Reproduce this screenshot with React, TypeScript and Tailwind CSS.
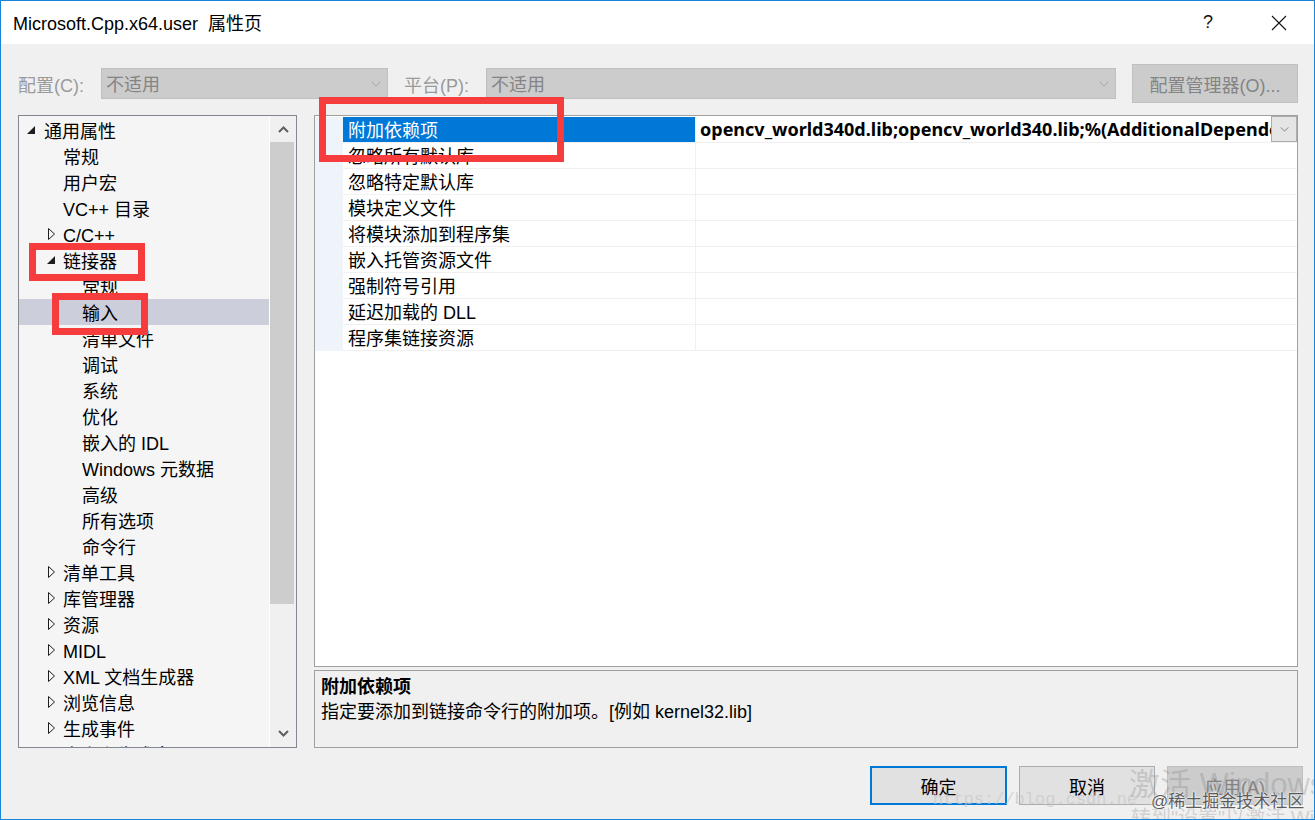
import React from "react";

type TreeItem = { level: number; text: string; arrow?: "exp" | "col"; selected?: boolean };

const tree: TreeItem[] = [
  { level: 0, text: "通用属性", arrow: "exp" },
  { level: 1, text: "常规" },
  { level: 1, text: "用户宏" },
  { level: 1, text: "VC++ 目录" },
  { level: 1, text: "C/C++", arrow: "col" },
  { level: 1, text: "链接器", arrow: "exp" },
  { level: 2, text: "常规" },
  { level: 2, text: "输入", selected: true },
  { level: 2, text: "清单文件" },
  { level: 2, text: "调试" },
  { level: 2, text: "系统" },
  { level: 2, text: "优化" },
  { level: 2, text: "嵌入的 IDL" },
  { level: 2, text: "Windows 元数据" },
  { level: 2, text: "高级" },
  { level: 2, text: "所有选项" },
  { level: 2, text: "命令行" },
  { level: 1, text: "清单工具", arrow: "col" },
  { level: 1, text: "库管理器", arrow: "col" },
  { level: 1, text: "资源", arrow: "col" },
  { level: 1, text: "MIDL", arrow: "col" },
  { level: 1, text: "XML 文档生成器", arrow: "col" },
  { level: 1, text: "浏览信息", arrow: "col" },
  { level: 1, text: "生成事件", arrow: "col" },
  { level: 1, text: "自定义生成步骤", arrow: "col" },
];

const props = [
  "附加依赖项",
  "忽略所有默认库",
  "忽略特定默认库",
  "模块定义文件",
  "将模块添加到程序集",
  "嵌入托管资源文件",
  "强制符号引用",
  "延迟加载的 DLL",
  "程序集链接资源",
];

const Chevron = ({ color = "#a6a6a6", w = 10, h = 6 }: { color?: string; w?: number; h?: number }) => (
  <svg width={w} height={h} viewBox="0 0 10 6">
    <path d="M0.5 0.5 L5 5 L9.5 0.5" fill="none" stroke={color} strokeWidth="1" />
  </svg>
);

const Dropdown = ({ width }: { width: string }) => (
  <div className={`${width} h-[31px] bg-[#cccccc] border border-[#bfbfbf] flex items-center pl-[4px] pr-[6px]`}>
    <span className="flex-1 text-[18px] text-[#848484] pt-[4px] leading-[25px]">不适用</span>
    <Chevron color="#a8a8a8" />
  </div>
);

const Arrow = ({ kind, level }: { kind?: "exp" | "col"; level: number }) => {
  if (!kind) return <div className="w-[25px] shrink-0" />;
  return (
    <div className={`w-[25px] shrink-0 flex items-center ${level === 0 ? "pl-[8px]" : "pl-[9px]"}`}>
      {kind === "exp" ? (
        <svg width="8" height="8" viewBox="0 0 8 8">
          <polygon points="8,0 8,8 0,8" fill="#1e1e1e" />
        </svg>
      ) : (
        <svg width="8" height="12" viewBox="0 0 8 12" className="ml-[1px]">
          <polygon points="0.5,0.5 6.5,6 0.5,11.5" fill="none" stroke="#1e1e1e" strokeWidth="1" />
        </svg>
      )}
    </div>
  );
};

export default function App() {
  return (
    <div className="relative w-[1315px] h-[820px] border border-[#1883d7] bg-[#f0f0f0] overflow-hidden font-['Liberation_Sans','Noto_Sans_CJK_SC',sans-serif] text-black flex flex-col">
      {/* Title bar */}
      <div className="h-[43px] bg-white flex items-center pl-[12px] shrink-0">
        <span className="text-[18px] flex-1 pt-[2px] leading-[24px]">Microsoft.Cpp.x64.user&nbsp; 属性页</span>
        <span className="text-[18px] mr-[58px] text-[#111]">?</span>
        <svg width="16" height="16" viewBox="0 0 16 16" className="mr-[27px]">
          <path d="M1 1 L15 15 M15 1 L1 15" stroke="#111" strokeWidth="1.1" />
        </svg>
      </div>

      {/* Config row */}
      <div className="flex items-center h-[39px] mt-[20px] pl-[17px] shrink-0">
        <span className="w-[83px] text-[18px] text-[#9a9a9a] pt-[4px] leading-[22px]">配置(C):</span>
        <Dropdown width="w-[287px]" />
        <span className="ml-[16px] w-[82px] text-[18px] text-[#9a9a9a] pt-[4px] leading-[22px]">平台(P):</span>
        <Dropdown width="w-[630px]" />
        <div className="ml-[16px] w-[166px] h-[39px] bg-[#cccccc] border border-[#bfbfbf] flex items-center justify-center text-[18px] text-[#848484]">
          <span className="pt-[4px] leading-[22px]">配置管理器(O)...</span>
        </div>
      </div>

      {/* Main */}
      <div className="flex mt-[12px] pl-[17px] gap-[17px] h-[633px] shrink-0">
        {/* Tree */}
        <div className="w-[279px] h-full border border-[#828790] bg-[#f5f5f5] flex overflow-hidden">
          <div className="w-[250px] pt-[1px] overflow-hidden">
            {tree.map((t, i) => (
              <div
                key={i}
                className={`flex items-center h-[26px] text-[18px] whitespace-nowrap ${t.selected ? "bg-[#cccedb]" : ""}`}
              >
                <div style={{ width: t.level * 19 }} className="shrink-0" />
                <Arrow kind={t.arrow} level={t.level} />
                <span className="pt-[4px] leading-[22px]">{t.text}</span>
              </div>
            ))}
          </div>
          <div className="w-[27px] border-l border-white bg-[#f0f0f0] flex flex-col">
            <div className="h-[26px] flex items-center justify-center">
              <svg width="11" height="7" viewBox="0 0 11 7">
                <path d="M1 6 L5.5 1.5 L10 6" fill="none" stroke="#606060" strokeWidth="2" />
              </svg>
            </div>
            <div className="w-[24px] h-[462px] bg-[#cdcdcd]" />
            <div className="flex-1" />
            <div className="h-[28px] flex items-center justify-center">
              <svg width="11" height="7" viewBox="0 0 11 7">
                <path d="M1 1 L5.5 5.5 L10 1" fill="none" stroke="#606060" strokeWidth="2" />
              </svg>
            </div>
          </div>
        </div>

        {/* Right column */}
        <div className="w-[984px] h-full flex flex-col gap-[3px]">
          <div className="h-[552px] border border-[#a0a0a0] bg-white pt-[1px] overflow-hidden">
            {props.map((p, i) => (
              <div key={i} className="flex h-[26px]">
                <div className="w-[28px] shrink-0 bg-[#eff3fa]" />
                <div
                  className={`w-[352px] shrink-0 border-b border-[#f0f0f0] pl-[5px] text-[18px] pt-[4px] leading-[21px] whitespace-nowrap ${
                    i === 0 ? "bg-[#0078d7] text-white" : ""
                  }`}
                >
                  {p}
                </div>
                <div className="flex-1 flex border-b border-l border-[#f0f0f0] min-w-0">
                  {i === 0 && (
                    <>
                      <div className="flex-1 min-w-0 overflow-hidden whitespace-nowrap pl-[4px] text-[18px] font-bold font-['Noto_Sans',sans-serif] leading-[25px]">
                        opencv_world340d.lib;opencv_world340.lib;%(AdditionalDependencies)
                      </div>
                      <div className="w-[26px] h-[26px] -mt-[1px] bg-[#e5e5e5] border border-[#acacac] flex items-center justify-center shrink-0">
                        <Chevron color="#707070" w={9} h={5} />
                      </div>
                    </>
                  )}
                </div>
              </div>
            ))}
          </div>
          <div className="flex-1 border border-[#a0a0a0] bg-[#f0f0f0] pt-[4px] px-[6px] text-[18px] leading-[25px]">
            <div className="font-bold">附加依赖项</div>
            <div>指定要添加到链接命令行的附加项。[例如 kernel32.lib]</div>
          </div>
        </div>
      </div>

      {/* Buttons */}
      <div className="flex justify-end gap-[12px] pr-[11px] mt-[18px] shrink-0">
        <div className="w-[137px] h-[39px] border-2 border-[#0078d7] bg-[#e1e1e1] flex items-center justify-center text-[18px]">
          <span className="pt-[4px] leading-[22px]">确定</span>
        </div>
        <div className="w-[136px] h-[39px] border border-[#adadad] bg-[#e1e1e1] flex items-center justify-center text-[18px]">
          <span className="pt-[4px] leading-[22px]">取消</span>
        </div>
        <div className="w-[136px] h-[39px] border border-[#bfbfbf] bg-[#cccccc] flex items-center justify-center text-[18px] text-[#848484]">
          <span className="pt-[4px] leading-[22px]">应用(A)</span>
        </div>
      </div>

      {/* Red annotation boxes */}
      <div className="absolute left-[28px] top-[242px] w-[116px] h-[38px] border-[7px] border-[#f63c3c]" />
      <div className="absolute left-[51px] top-[292px] w-[96px] h-[42px] border-[7px] border-[#f63c3c]" />
      <div className="absolute left-[318px] top-[96px] w-[245px] h-[65px] border-[7px] border-[#f63c3c]" />

      {/* Watermarks */}
      <div className="absolute left-[932px] top-[786px] font-['Liberation_Mono',monospace] text-[17px] text-[#c8c8c8]/70 whitespace-nowrap">
        https://blog.csdn.ne
      </div>
      <div className="absolute left-[1128px] top-[764px] text-[31px] text-[#808080]/30 whitespace-nowrap leading-[40px]">
        激活 Windows
      </div>
      <div className="absolute left-[1130px] top-[804px] text-[20px] text-[#808080]/30 whitespace-nowrap leading-[26px]">
        转到"设置"以激活 Windows。
      </div>
      <div className="absolute left-[1150px] top-[789px] text-[17px] text-[#5c5c5c] whitespace-nowrap leading-[24px] [text-shadow:0_0_2px_#fff,0_0_2px_#fff]">
        @稀土掘金技术社区
      </div>
    </div>
  );
}
